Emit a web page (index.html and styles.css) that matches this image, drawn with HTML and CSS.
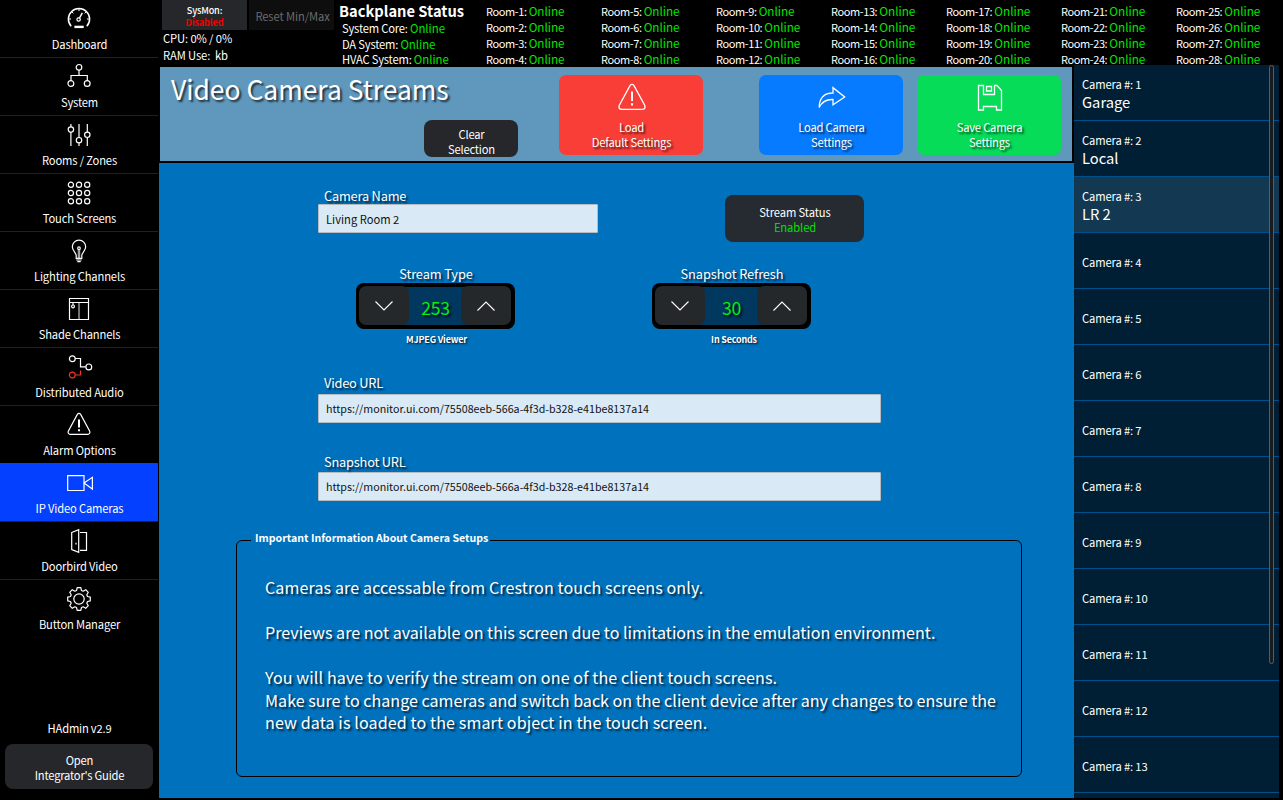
FILE: index.html
```html
<!DOCTYPE html>
<html lang="en">
<head>
<meta charset="utf-8">
<title>HAdmin - Video Camera Streams</title>
<link rel="stylesheet" href="styles.css">
</head>
<body>
<div class="app">
  <aside class="sidebar">
    <nav class="nav">
      <a class="nav-item"><svg class="icon" viewBox="0 0 24 24"><path d="M4.2 20.2A10.6 10.6 0 1 1 19.8 20.2" stroke-width="1.5"/><path d="M12 3v2M5 6l1.3 1.3M19 6l-1.3 1.3M2 13h2M22 13h-2" stroke-width="1"/><circle cx="11.6" cy="13.5" r="1.7"/><path d="M12.5 12 15.3 6.8" stroke-width="1.5"/><path d="M7.4 20.9h9.3" stroke-width="2.4"/></svg><span>Dashboard</span></a>
      <a class="nav-item"><svg class="icon" viewBox="0 0 24 24"><circle cx="12" cy="3.3" r="2.8"/><path d="M12 6v5.5M4 16.5v-5h16.3v5"/><circle cx="3.9" cy="19.5" r="2.9"/><circle cx="20.2" cy="19.5" r="2.9"/></svg><span>System</span></a>
      <a class="nav-item"><svg class="icon" viewBox="0 0 24 24"><path d="M3.9 2v3M3.9 10.2V24M12 2v13.4M12 21v3M20.3 2v8M20.3 15.5V24"/><circle cx="3.9" cy="7.6" r="2.7"/><circle cx="12" cy="18.2" r="2.7"/><circle cx="20.3" cy="12.8" r="2.7"/></svg><span>Rooms / Zones</span></a>
      <a class="nav-item"><svg class="icon" viewBox="0 0 24 24"><circle cx="3.9" cy="4.7" r="2.6"/><circle cx="12" cy="4.7" r="2.6"/><circle cx="20.2" cy="4.7" r="2.6"/><circle cx="3.9" cy="13" r="2.6"/><circle cx="12" cy="13" r="2.6"/><circle cx="20.2" cy="13" r="2.6"/><circle cx="3.9" cy="21.2" r="2.6"/><circle cx="12" cy="21.2" r="2.6"/><circle cx="20.2" cy="21.2" r="2.6"/></svg><span>Touch Screens</span></a>
      <a class="nav-item"><svg class="icon" viewBox="0 0 24 24"><path d="M9.2 20.3V17.5C9.2 15 5.3 12.8 5.3 8.8a6.7 6.7 0 0 1 13.4 0c0 4-3.9 6.2-3.9 8.700v2.800z"/><path d="M11.3 11.500v8.500M12.700 11.500v8.500" stroke-width=".8"/><circle cx="12" cy="10.200" r="1.300"/><path d="M9.300 22h5.400M10.300 23.600h3.400"/></svg><span>Lighting Channels</span></a>
      <a class="nav-item"><svg class="icon" viewBox="0 0 24 24"><path d="M2.500 2.500h19v21h-19zM2.500 6.500h19"/><path d="M12 6.500v17" stroke-width=".9"/><path d="M6 6.500V9"/><circle cx="6" cy="10.400" r="1.400"/></svg><span>Shade Channels</span></a>
      <a class="nav-item"><svg class="icon" viewBox="0 0 24 24"><circle cx="5.300" cy="4.700" r="2.900"/><path d="M8.200 4.500h5.300v8.300h5.300"/><circle cx="21.800" cy="12.900" r="2.900"/><g class="red"><circle cx="5.300" cy="21" r="2.900"/><path d="M8.200 21h5.300v-4.500"/></g></svg><span>Distributed Audio</span></a>
      <a class="nav-item"><svg class="icon" viewBox="0 0 24 24"><path d="M10.200 2.600Q12 .300 13.800 2.600L22.700 19.200Q23.500 21.800 21 22.300H3Q.500 21.800 1.300 19.200Z"/><path d="M12 7.500v8" stroke-width="2"/><path d="M12 17.300v2" stroke-width="2"/></svg><span>Alarm Options</span></a>
      <a class="nav-item active"><svg class="icon" viewBox="0 0 24 24"><path d="M.700 5.600h16.300v14.900H.700zM17 12.900 25.400 7.300V19z"/></svg><span>IP Video Cameras</span></a>
      <a class="nav-item"><svg class="icon" viewBox="0 0 24 24"><path d="M4.700 4.500 11.700 1.700V24.300L4.700 21.500zM13 4.500h6.500v17.800H13"/><path d="M9 14.800v1.600"/></svg><span>Doorbird Video</span></a>
      <a class="nav-item"><svg class="icon" viewBox="0 0 24 24"><g transform="translate(12 13)"><path d="M-2.500-8.500-1.800-11.300H1.800L2.500-8.500 4.200-7.800 6.700-9.300 9.300-6.700 7.800-4.200 8.500-2.500 11.300-1.800V1.800L8.500 2.500 7.800 4.200 9.300 6.700 6.700 9.300 4.200 7.800 2.500 8.500 1.800 11.300H-1.800L-2.500 8.500-4.200 7.800-6.700 9.300-9.300 6.700-7.800 4.200-8.500 2.500-11.300 1.800V-1.800L-8.500-2.500-7.800-4.200-9.300-6.700-6.700-9.300-4.200-7.800Z" stroke-linejoin="round"/><circle r="5.200"/></g></svg><span>Button Manager</span></a>
    </nav>
    <footer class="side-foot">
      <div class="version">HAdmin v2.9</div>
      <button class="dark-btn guide">Open<br>Integrator's Guide</button>
    </footer>
  </aside>

  <header class="status">
    <section class="monitor">
      <div class="mon-btns">
        <button class="mon-btn">SysMon:<br><b class="off">Disabled</b></button>
        <button class="mon-btn reset">Reset Min/Max</button>
      </div>
      <div class="mon-line">CPU: 0% / 0%</div>
      <div class="mon-line">RAM Use:&nbsp; kb</div>
    </section>
    <section class="backplane">
      <h2>Backplane Status</h2>
      <p>System Core: <i>Online</i></p>
      <p>DA System: <i>Online</i></p>
      <p>HVAC System: <i>Online</i></p>
    </section>
    <section class="rooms">
      <p>Room-1: <i>Online</i></p><p>Room-2: <i>Online</i></p><p>Room-3: <i>Online</i></p><p>Room-4: <i>Online</i></p>
      <p>Room-5: <i>Online</i></p><p>Room-6: <i>Online</i></p><p>Room-7: <i>Online</i></p><p>Room-8: <i>Online</i></p>
      <p>Room-9: <i>Online</i></p><p>Room-10: <i>Online</i></p><p>Room-11: <i>Online</i></p><p>Room-12: <i>Online</i></p>
      <p>Room-13: <i>Online</i></p><p>Room-14: <i>Online</i></p><p>Room-15: <i>Online</i></p><p>Room-16: <i>Online</i></p>
      <p>Room-17: <i>Online</i></p><p>Room-18: <i>Online</i></p><p>Room-19: <i>Online</i></p><p>Room-20: <i>Online</i></p>
      <p>Room-21: <i>Online</i></p><p>Room-22: <i>Online</i></p><p>Room-23: <i>Online</i></p><p>Room-24: <i>Online</i></p>
      <p>Room-25: <i>Online</i></p><p>Room-26: <i>Online</i></p><p>Room-27: <i>Online</i></p><p>Room-28: <i>Online</i></p>
    </section>
  </header>

  <div class="center">
    <div class="banner">
      <h1>Video Camera Streams</h1>
      <button class="dark-btn clear">Clear<br>Selection</button>
      <button class="action danger"><svg class="action-icon" viewBox="0 0 28 28"><path d="M12 2.600Q14 .200 16 2.600L26.800 22.500Q27.800 25.800 24.800 26.300H3.200Q.200 25.800 1.200 22.500Z"/><path d="M14 8.500v9.500M14 20.300v2.300" stroke-width="2"/></svg>Load<br>Default Settings</button>
      <button class="action load"><svg class="action-icon" viewBox="0 0 28 28"><path d="M1.200 24.500C1.200 15.500 5.500 10 15 10V4.700L26.700 14 15 21.800V16.500C8.500 16.200 4 18.500 1.200 24.500Z"/></svg>Load Camera<br>Settings</button>
      <button class="action save"><svg class="action-icon" viewBox="0 0 28 28"><path d="M2.500 2.500H7.500V11.500H18.500V2.500H21L25.500 7.500V27H20.500V23.500H7.500V27H2.500ZM10.500 3.500h5v4.500h-5z"/></svg>Save Camera<br>Settings</button>
    </div>

    <main class="panel">
      <div class="row top-row">
        <div class="field short">
          <label>Camera Name</label>
          <div class="input">Living Room 2</div>
        </div>
        <button class="dark-btn stream">Stream Status<br><span class="on">Enabled</span></button>
      </div>
      <div class="row steppers">
        <div class="stepper-group">
          <label>Stream Type</label>
          <div class="stepper">
            <button class="step"><svg viewBox="0 0 18 10"><path d="M.500.500 9 9 17.500.500"/></svg></button>
            <output>253</output>
            <button class="step up"><svg viewBox="0 0 18 10"><path d="M.500 9.500 9 1 17.500 9.500"/></svg></button>
          </div>
          <small>MJPEG Viewer</small>
        </div>
        <div class="stepper-group">
          <label>Snapshot Refresh</label>
          <div class="stepper">
            <button class="step"><svg viewBox="0 0 18 10"><path d="M.500.500 9 9 17.500.500"/></svg></button>
            <output>30</output>
            <button class="step up"><svg viewBox="0 0 18 10"><path d="M.500 9.500 9 1 17.500 9.500"/></svg></button>
          </div>
          <small class="wide">In Seconds</small>
        </div>
      </div>
      <div class="field url">
        <label>Video URL</label>
        <div class="input">https://monitor.ui.com/75508eeb-566a-4f3d-b328-e41be8137a14</div>
      </div>
      <div class="field url snapshot">
        <label>Snapshot URL</label>
        <div class="input">https://monitor.ui.com/75508eeb-566a-4f3d-b328-e41be8137a14</div>
      </div>
      <fieldset class="info">
        <legend>Important Information About Camera Setups</legend>
        <p class="loose">Cameras are accessable from Crestron touch screens only.</p>
        <p>Previews are not available on this screen due to limitations in the emulation environment.</p>
        <p><span class="loose">You will have to verify the stream on one of the client touch screens.</span><br>Make sure to change cameras and switch back on the client device after any changes to ensure the<br><span class="loose">new data is loaded to the smart object in the touch screen.</span></p>
      </fieldset>
    </main>
  </div>

  <aside class="cameras">
    <div class="cam"><span>Camera #: 1</span><strong>Garage</strong></div>
    <div class="cam"><span>Camera #: 2</span><strong>Local</strong></div>
    <div class="cam selected"><span>Camera #: 3</span><strong>LR 2</strong></div>
    <div class="cam"><span>Camera #: 4</span></div>
    <div class="cam"><span>Camera #: 5</span></div>
    <div class="cam"><span>Camera #: 6</span></div>
    <div class="cam"><span>Camera #: 7</span></div>
    <div class="cam"><span>Camera #: 8</span></div>
    <div class="cam"><span>Camera #: 9</span></div>
    <div class="cam"><span>Camera #: 10</span></div>
    <div class="cam"><span>Camera #: 11</span></div>
    <div class="cam"><span>Camera #: 12</span></div>
    <div class="cam"><span>Camera #: 13</span></div>
    <div class="scrollbar"></div>
  </aside>
</div>
</body>
</html>
```
FILE: styles.css
```css
* { box-sizing: border-box; }
body {
  margin: 0;
  background: #000;
  color: #fff;
  font: 400 11.2px/15px "Noto Sans CJK SC", "Noto Sans", sans-serif;
  letter-spacing: -.2px;
}
h1, h2, p { margin: 0; }
button { font: inherit; letter-spacing: inherit; color: inherit; border: 0; padding: 0; text-align: center; }
label, small { display: block; }
svg { display: block; fill: none; stroke: #fff; overflow: visible; }

.app {
  display: grid;
  grid-template: 65px 733px / 159px 915px 205px;
  width: 1283px;
  height: 800px;
  overflow: hidden;
}

/* Navigation */
.sidebar {
  grid-row: 1 / 3;
  display: flex;
  flex-direction: column;
  justify-content: space-between;
  height: 789px;
}
.nav-item {
  display: flex;
  flex-direction: column;
  align-items: center;
  width: 158px;
  height: 58px;
  padding-top: 6px;
  border-bottom: 1px solid #202020;
}
.nav-item:last-child { border-bottom: 0; }
.nav-item span { margin-top: 6.500px; padding-left: 1px; letter-spacing: -.160px; }
.nav-item.active { margin-top: -1px; height: 59px; padding-top: 7px; background: #0340ff; border-bottom-color: #222; }
.icon { width: 24px; height: 24px; stroke-width: 1.2; }
.icon .red { stroke: #f33426; }
.side-foot { padding: 0 5px; width: 158px; }
.version { text-align: center; margin: 0 0 8px 1px; }
.dark-btn { background: #25272a; border-radius: 8px; }
.guide { display: block; width: 148px; height: 45px; padding: 3px 0 0 1px; }

/* Status bar */
.status {
  grid-column: 2 / 4;
  display: flex;
  line-height: 16px;
}
.status p { white-space: nowrap; }
.status i { font-style: normal; color: #00e800; font-size: 11.7px; letter-spacing: 0; }
.monitor { flex: 0 0 180px; padding-left: 3px; }
.mon-btns { display: flex; gap: 2px; }
.mon-btn { width: 85px; height: 30px; background: #25272a; font-size: 9.2px; font-weight: 500; line-height: 12px; padding-top: 1px; }
.off { color: #f00000; }
.mon-btn.reset { background: #0e0e0e; color: #6b6b6b; font-size: 11.2px; font-weight: 400; letter-spacing: -.1px; padding: 1px 0 0 2px; }
.mon-line { padding-left: 1px; line-height: 17px; letter-spacing: -.1px; }
.backplane { flex: 0 0 147px; padding-left: 3px; }
.backplane h2 { margin-left: -3px; font-size: 14.7px; font-weight: 700; line-height: 21px; letter-spacing: 0; }
.backplane p { line-height: 15.700px; }
.backplane i { font-size: 11.400px; }
.rooms {
  display: grid;
  grid-auto-flow: column;
  grid-template-rows: repeat(4, 16px);
  grid-auto-columns: 115px;
  padding-top: 3px;
  font-size: 11px;
  letter-spacing: -.400px;
}

/* Title banner */
.center { padding: 2px 0 0; }
.banner {
  display: flex;
  margin: 0 2px 2px 1px;
  height: 94px;
  padding: 8px 11px;
  background: #6098bd;
}
h1 {
  width: 253px;
  margin-top: -4px;
  white-space: nowrap;
  font-size: 26.450px;
  font-weight: 400;
  line-height: 36px;
  letter-spacing: 0;
  text-shadow: 2px 2px 2px rgba(0, 0, 0, .7);
}
.clear { width: 94px; height: 37px; margin: 45px 41px 0 0; padding: 6px 0 0 1px; line-height: 15px; }
.action {
  width: 144px;
  height: 80px;
  border-radius: 7px;
  padding: 2px 0 0 1px;
  text-shadow: 2px 2px 2px rgba(0, 0, 0, .7);
}
.action-icon { width: 28px; height: 28px; margin: 0 auto 9px; stroke-width: 1.300; }
.danger { background: #f93e38; margin-right: 56px; }
.load { background: #067bff; margin-right: 14px; }
.save { background: #06dc57; }

/* Camera form */
.panel { height: 635px; padding: 24px 0 0 77px; background: #0071bd; }
.panel label {
  font-size: 12.800px;
  line-height: 18px;
  text-shadow: 2px 2px 2px rgba(0, 0, 0, .75);
}
.row { display: flex; }
.field { margin-left: 82px; }
.field label { padding-left: 6px; }
.input {
  height: 29px;
  border: 1px solid #b5bcc2;
  border-radius: 1px;
  background: #d9e9f5;
  color: #111;
  font-size: 10.700px;
  letter-spacing: 0;
  line-height: 28px;
  padding-left: 7px;
  white-space: nowrap;
}
.top-row { height: 78px; }
.short { width: 280px; }
.short .input { margin-top: -1px; font-size: 11.200px; }
.stream { width: 139px; height: 47px; margin: 8px 0 0 127px; background: #252b31; padding: 3px 0 0 1px; letter-spacing: -.100px; }
.on { color: #00e000; }
.steppers { height: 109px; padding-left: 120px; gap: 137px; }
.stepper-group { width: 159px; text-align: center; }
.stepper {
  display: flex;
  justify-content: space-between;
  height: 46px;
  padding: 3px 4px 4px 3px;
  border-radius: 8px;
  background: linear-gradient(#003860, #003860) 50% 4px / 70px 38px no-repeat #000;
}
.step { display: grid; place-items: center; width: 50px; height: 39px; border-radius: 7px; background: #25282b; }
.step svg { width: 18px; height: 10px; stroke-width: 1.100; }
.stepper output { padding-left: 1px; color: #00f010; font-size: 17.600px; line-height: 43px; text-shadow: 2px 2px 2px rgba(0, 0, 0, .8); }
.stepper-group small { margin: 3px 0 0 2px; font-size: 9px; font-weight: 700; text-shadow: 1px 1px 2px rgba(0, 0, 0, .9); }
.stepper-group small.wide { margin-left: 5px; }
.stepper-group label { padding-left: 1px; letter-spacing: -.100px; }
.url { width: 563px; height: 78px; }
.url .input { margin-top: 2px; }
.snapshot { padding-top: 1px; }
.snapshot .input { margin-top: 1px; }
.info {
  width: 786px;
  height: 247px;
  margin: 0;
  padding: 26px 0 0 28px;
  border: 1px solid #000;
  border-radius: 6px;
  font-size: 16.100px;
  letter-spacing: 0;
  line-height: 22.500px;
  white-space: nowrap;
  text-shadow: 2px 2px 2px rgba(0, 0, 0, .7);
}
.info legend { margin-left: -14px; padding: 0 2px 5px 4px; font-size: 10.600px; font-weight: 700; line-height: 15px; text-shadow: none; }
.info p + p { margin-top: 22.500px; }
.loose { letter-spacing: .1px; }

/* Camera list */
.cameras { position: relative; overflow: hidden; background: #001f34; }
.cam {
  display: flex;
  flex-direction: column;
  justify-content: center;
  height: 56px;
  padding: 4px 8px 0;
  border-bottom: 1px solid #004f88;
}
.cam span { letter-spacing: -.130px; }
.cam strong { font-size: 14.700px; font-weight: 400; line-height: 20px; letter-spacing: 0; }
.cam.selected { background: #123852; }
.scrollbar {
  position: absolute;
  top: 0;
  right: 5px;
  width: 5px;
  height: 599px;
  border: 1px solid #5a5d60;
  border-radius: 3px;
  background: #181c20;
}
```
